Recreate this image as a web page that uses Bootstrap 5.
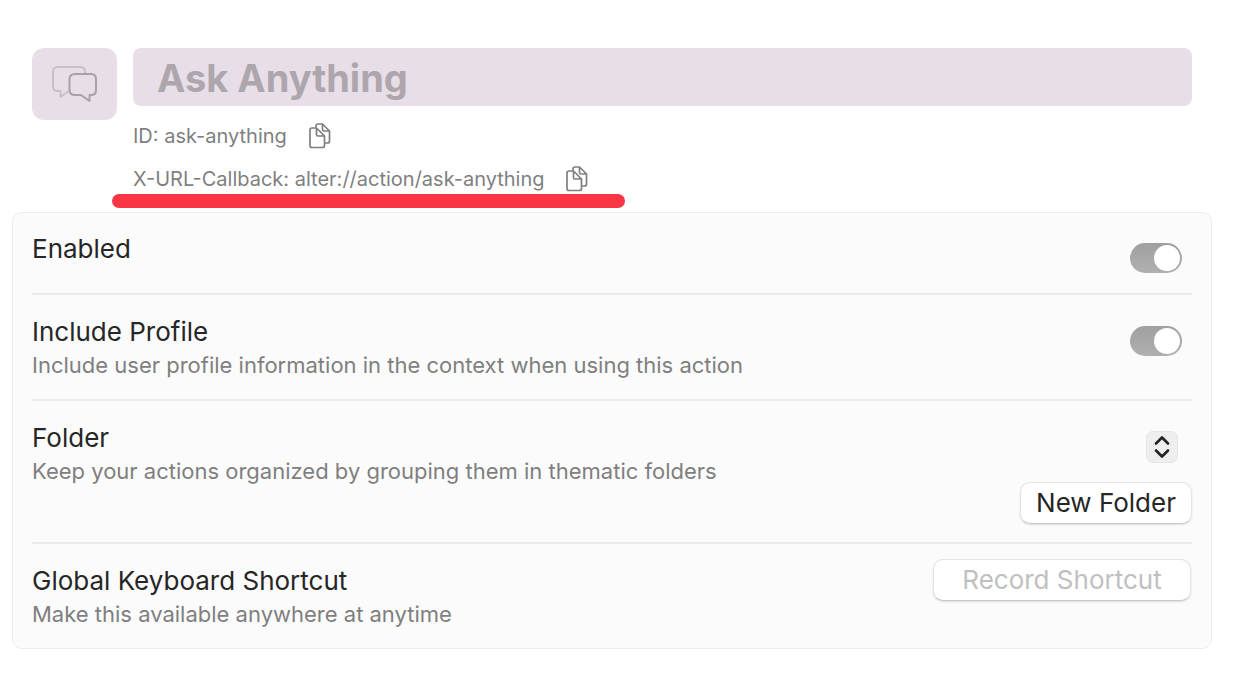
<!DOCTYPE html>
<html lang="en">
<head>
<meta charset="utf-8">
<meta name="viewport" content="width=device-width, initial-scale=1">
<title>Ask Anything</title>
<link href="https://cdn.jsdelivr.net/npm/bootstrap@5.3.0/dist/css/bootstrap.min.css" rel="stylesheet">
<style>
  body { font-family: Inter, "Liberation Sans", sans-serif; color: #262626; background: #fff; }
  .page { padding: 48px 22px 44px 12px; }
  .action-head { padding: 0 20px; gap: 16px; }
  .action-icon { width: 85px; height: 72px; border-radius: 12px; background: #e8dee7; }
  .name-field { height: 58px; padding: 2px 24px 0; border: 0; border-radius: 8px; background: #e8dee7; color: #ada6ad; font-size: 38px; line-height: 56px; font-weight: 700; }
  .name-field:focus { background: #e8dee7; color: #ada6ad; }
  .meta-line { font-size: 20px; line-height: 28px; color: #7f7f7f; gap: 20px; }
  .meta-list { padding-top: 16px; gap: 15px; }
  .copy-btn { width: 28px; height: 28px; color: #7f7f7f; }
  .callback { position: relative; }
  .marker { position: absolute; left: -21px; top: 29px; width: 513px; height: 14px; border-radius: 7px; background: #fb3644; }
  .settings { margin-top: 19px; padding: 0 19px; border: 1px solid #ececec; border-radius: 10px; background: #fbfbfb; }
  .setting { padding: 20px 0 18px; border-bottom: 2px solid #ececec; }
  .setting:first-child { padding: 19px 0 27px; }
  .setting:last-child { border-bottom: 0; }
  .setting-title { font-size: 26px; line-height: 34px; }
  .setting-note { font-size: 22px; line-height: 32px; color: #7f7f7f; }
  .setting .form-switch { height: 30px; min-height: 0; margin: 11px 10px -8px 0; }
  .setting .form-switch .form-check-input { width: 52px; height: 30px; margin: 0; border: 0; background: linear-gradient(#a0a0a0, #b0b0b0); position: relative; }
  .setting .form-switch .form-check-input::after { content: ""; position: absolute; right: 2px; top: 2px; width: 26px; height: 26px; border-radius: 50%; background: #fff; }
  .setting .form-switch .form-check-input:not(:checked)::after { right: auto; left: 2px; }
  .folder-pick { position: relative; width: 32px; height: 32px; margin: 10px 14px 19px 0; }
  .folder-pick select { appearance: none; width: 32px; height: 32px; border: 1px solid #e6e6e6; border-radius: 7px; background: #eee; color: transparent; }
  .folder-pick svg { position: absolute; inset: 0; pointer-events: none; }
  .mac-btn, .mac-btn:disabled { height: 42px; padding: 0 15px; border: 1px solid #e4e4e4; border-bottom-color: #c8c8c8; border-radius: 10px; background: #fff; color: #262626; font-size: 26px; line-height: 38px; box-shadow: 0 1px 2px rgba(0,0,0,.12); }
  .mac-btn:disabled { color: #bfbfbf; opacity: 1; }
  .record-btn { width: 258px; margin: -5px 1px 0 0; }
</style>
</head>
<body>
<svg class="d-none" xmlns="http://www.w3.org/2000/svg">
  <symbol id="copy" viewBox="0 0 28 28">
    <g fill="none" stroke="currentColor" stroke-width="1.7" stroke-linejoin="round" stroke-linecap="round">
      <path d="M9 5V4Q9 2 11 2H15.500L22.500 9V19Q22.500 21 20.500 21H18.500M15.500 2V7.500Q15.500 9 17 9H22.500"/>
      <path d="M5 6H9.500L17.500 14V23.500Q17.500 25.500 15.500 25.500H5Q3 25.500 3 23.500V8Q3 6 5 6ZM9.500 6V12.500Q9.500 14 11 14H17.500"/>
    </g>
  </symbol>
</svg>
<main class="page">
  <header class="action-head d-flex align-items-start">
    <div class="action-icon d-flex flex-shrink-0 align-items-center justify-content-center">
      <svg width="48" height="38" viewBox="0 0 48 38" fill="none" stroke-width="2" stroke-linejoin="round" stroke-linecap="round" aria-hidden="true">
        <path stroke="#c8c0c8" d="M34 9V7Q34 2 29 2H7Q2 2 2 7V21Q2 26 7 26H9.500V32L17 26.500"/>
        <path stroke="#a8a1a8" d="M24 9H40Q45 9 45 14V25Q45 30 40 30H38.500V36L30 30H24Q18.500 30 18.500 25V14Q18.500 9 24 9Z"/>
      </svg>
    </div>
    <div class="flex-grow-1">
      <input class="name-field form-control shadow-none" type="text" value="Ask Anything" aria-label="Action name">
      <div class="meta-list d-flex flex-column align-items-start">
        <div class="meta-line d-flex align-items-center">
          <span>ID: ask-anything</span>
          <button class="copy-btn btn p-0 border-0 d-flex" type="button" aria-label="Copy ID"><svg width="28" height="28"><use href="#copy"/></svg></button>
        </div>
        <div class="callback meta-line d-flex align-items-center">
          <span>X-URL-Callback: alter://action/ask-anything</span>
          <button class="copy-btn btn p-0 border-0 d-flex" type="button" aria-label="Copy callback URL"><svg width="28" height="28"><use href="#copy"/></svg></button>
          <div class="marker"></div>
        </div>
      </div>
    </div>
  </header>

  <section class="settings">
    <div class="setting d-flex justify-content-between align-items-start">
      <label class="setting-title" for="enabled">Enabled</label>
      <div class="form-check form-switch p-0"><input class="form-check-input shadow-none" type="checkbox" role="switch" id="enabled" checked></div>
    </div>
    <div class="setting d-flex justify-content-between align-items-start">
      <div>
        <label class="setting-title d-block" for="profile">Include Profile</label>
        <div class="setting-note">Include user profile information in the context when using this action</div>
      </div>
      <div class="form-check form-switch p-0"><input class="form-check-input shadow-none" type="checkbox" role="switch" id="profile" checked></div>
    </div>
    <div class="setting d-flex justify-content-between align-items-start">
      <div>
        <label class="setting-title d-block" for="folder">Folder</label>
        <div class="setting-note">Keep your actions organized by grouping them in thematic folders</div>
      </div>
      <div class="d-flex flex-column align-items-end">
        <div class="folder-pick">
          <select id="folder"><option value=""></option></select>
          <svg width="32" height="32" viewBox="0 0 32 32" fill="none" stroke="#222" stroke-width="2.600" stroke-linecap="round" stroke-linejoin="round" aria-hidden="true"><path d="M10 12.500L16 6.500L22 12.500M10 19.500L16 25.500L22 19.500"/></svg>
        </div>
        <button class="mac-btn btn" type="button">New Folder</button>
      </div>
    </div>
    <div class="setting d-flex justify-content-between align-items-start">
      <div>
        <div class="setting-title">Global Keyboard Shortcut</div>
        <div class="setting-note">Make this available anywhere at anytime</div>
      </div>
      <button class="mac-btn record-btn btn" type="button" disabled>Record Shortcut</button>
    </div>
  </section>
</main>
<script src="https://cdn.jsdelivr.net/npm/bootstrap@5.3.0/dist/js/bootstrap.bundle.min.js"></script>
</body>
</html>
